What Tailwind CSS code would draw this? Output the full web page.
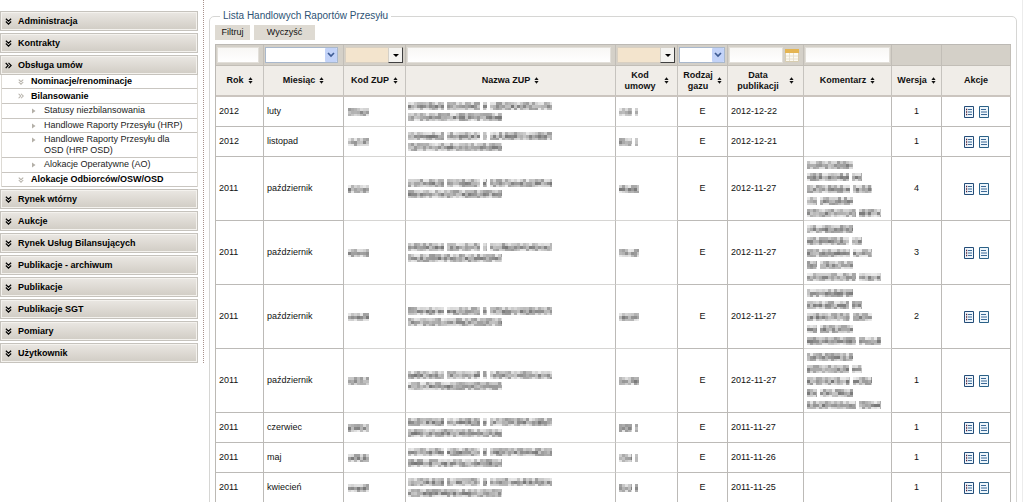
<!DOCTYPE html>
<html lang="pl">
<head>
<meta charset="utf-8">
<title>Lista Handlowych Raportów Przesyłu</title>
<script src="https://cdn.jsdelivr.net/npm/@tailwindcss/browser@4"></script>
</head>
<body class="bg-white text-[#111] text-[9px] leading-[11px] font-['Liberation_Sans',Arial,sans-serif]">
<svg class="hidden" aria-hidden="true">
  <symbol id="down" viewBox="0 0 8 8"><path d="M1 .8 4 3.6 7 .8M1 4 4 7 7 4" fill="none" stroke="currentColor" stroke-width="1.4"/></symbol>
  <symbol id="right" viewBox="0 0 8 8"><path d="M.8 1 3.6 4 .8 7M4 1 7 4 4 7" fill="none" stroke="currentColor" stroke-width="1.4"/></symbol>
  <symbol id="tri" viewBox="0 0 4 6"><path d="M0 .5 3.5 3 0 5.5z" fill="currentColor"/></symbol>
  <symbol id="sort" viewBox="0 0 5 7"><path d="M2.5 .3 4.6 3H.4zM.4 4h4.2L2.5 6.7z" fill="currentColor"/></symbol>
  <symbol id="list" viewBox="0 0 10 12"><path d="M.5.5h9v11h-9z" fill="#eef6fc" stroke="#244c78"/><path d="M4 3.5h4M4 6h4M4 8.5h4" stroke="#3d6a97"/><path d="M2 3.5h1.2M2 6h1.2M2 8.5h1.2" stroke="#5a1f33" stroke-width="1.4"/></symbol>
  <symbol id="doc" viewBox="0 0 10 12"><path d="M.5.5h9v11h-9z" fill="#eef6fc" stroke="#2b6187"/><path d="M2 3.5h5M2 6h6M2 8.5h6" stroke="#3d6a97"/></symbol>
</svg>

<div class="flex items-start border-r border-[#ececec] overflow-hidden h-screen">
  <nav class="w-[204px] shrink-0 pt-[11px] pr-[5px] border-r border-dotted border-[#a8928c] text-black" aria-label="Menu">
    <ul id="menu" class="flex flex-col gap-[2px]"></ul>
  </nav>

  <main class="grow min-w-0 pl-[5px] pr-[5px] pt-[10px]">
    <fieldset class="min-w-0 border border-[#d6d6d4] rounded-[5px] px-[5px] pb-2">
      <legend class="ml-[5px] px-[3px] text-[10px] leading-[12px] text-[#2d5375]">Lista Handlowych Raportów Przesyłu</legend>
      <div class="flex gap-1 pt-[3px] pb-1">
        <button type="button" class="h-[15px] w-[35px] bg-[#dedad2]">Filtruj</button>
        <button type="button" class="h-[15px] w-[61px] bg-[#dedad2]">Wyczyść</button>
      </div>
      <table class="w-full table-fixed border-separate border-spacing-0 border-l border-t border-[#bcb9b4]">
        <colgroup>
          <col class="w-[48px]"><col class="w-[80px]"><col class="w-[62px]"><col><col class="w-[62px]"><col class="w-[50px]"><col class="w-[76px]"><col class="w-[88px]"><col class="w-[50px]"><col class="w-[69px]">
        </colgroup>
        <thead id="head"></thead>
        <tbody id="rows"></tbody>
      </table>
    </fieldset>
  </main>
</div>

<script>
const icon = (id, cls) => `<svg class="${cls}" aria-hidden="true"><use href="#${id}"/></svg>`;

/* Side menu */
const sub = [
  [2, 'Nominacje/renominacje', 'down', 'h-[14px]'],
  [2, 'Bilansowanie', 'right', 'h-[15px]'],
  [3, 'Statusy niezbilansowania', 'tri', 'h-[15px]'],
  [3, 'Handlowe Raporty Przesyłu (HRP)', 'tri', 'h-[14px]'],
  [3, 'Handlowe Raporty Przesyłu dla<br>OSD (HRP OSD)', 'tri', 'h-[25px]'],
  [3, 'Alokacje Operatywne (AO)', 'tri', 'h-[15px]'],
  [2, 'Alokacje Odbiorców/OSW/OSD', 'down', 'h-[14px]'],
];
const subHtml = '<ul class="border-x border-[#dddad4] ml-px">' + sub.map(([lvl, t, ic, h]) => lvl === 2
  ? `<li><a href="#" class="flex items-center gap-[7px] pl-4 font-bold border-b border-[#c9c6c1] ${h}">${icon(ic, 'size-[6px] text-[#b4b0a8]')}${t}</a></li>`
  : `<li><a href="#" class="flex items-start gap-2 pt-px pl-[30px] text-[#222] border-b border-[#c9c6c1] ${h}">${icon(ic, 'w-1 h-[6px] mt-[3px] text-[#b4b0a8]')}<span>${t}</span></a></li>`).join('') + '</ul>';
document.getElementById('menu').innerHTML = ['Administracja', 'Kontrakty', 'Obsługa umów', 'Rynek wtórny', 'Aukcje', 'Rynek Usług Bilansujących', 'Publikacje - archiwum', 'Publikacje', 'Publikacje SGT', 'Pomiary', 'Użytkownik']
  .map(t => `<li><button type="button" class="w-full h-5 border border-[#c6c3bd] p-px bg-[#f4f2ee]"><span class="flex items-center gap-[6px] h-4 pl-[3px] font-bold bg-linear-to-b from-[#e9e6e1] to-[#d2cec6]">${icon(t === 'Obsługa umów' ? 'right' : 'down', 'size-[7px]')}${t}</span></button>${t === 'Obsługa umów' ? subHtml : ''}</li>`).join('');

/* Mosaic that covers confidential values: each line is a list of [start, end] word spans */
let seed = 7;
const rnd = () => (seed = (seed * 16807) % 2147483647) / 2147483647;
function mosaic(w, lines, step) {
  let r = '';
  lines.forEach((words, li) => words.forEach(([a, b]) => {
    for (let x = a; x < b; x += 3) for (let k = 0; k < 3; k++) {
      const g = Math.round((k === 1 ? 120 : 155) + rnd() * 80);
      r += `<rect x="${x}" y="${li * step + k * 3}" width="${Math.min(3, b - x)}" height="${k === 2 ? 2 : 3}" fill="rgb(${g},${g},${g})"/>`;
    }
  }));
  const h = (lines.length - 1) * step + 8;
  return `<svg width="${w}" height="${h}" viewBox="0 0 ${w} ${h}" shape-rendering="crispEdges" role="img" aria-label="dane ukryte" class="block">${r}</svg>`;
}
const nameLines = [[[0, 36], [39, 72], [75, 79], [82, 144]], [[0, 94]]];
const noteLines = [[[0, 46]], [[0, 42], [45, 55]], [[0, 43], [46, 65]], [[0, 10], [13, 46]], [[0, 49], [52, 74]]];

/* Filter row and column headings */
const field = 'block w-full h-4 border border-[#e2dfd9] bg-linear-to-b from-[#f8f7f5] to-white';
const input = l => `<input type="text" aria-label="${l}" class="${field}">`;
const select = l => `<span class="relative block"><select aria-label="${l}" class="appearance-none block w-full h-4 bg-white border border-[#a9b8cc]"><option></option></select><span class="pointer-events-none absolute right-px top-px w-3 h-[14px] rounded-[1px] bg-[#c3d3f8] flex items-center justify-center"><svg class="w-2 h-[6px]" viewBox="0 0 8 6" aria-hidden="true"><path d="M1 1l3 3 3-3" fill="none" stroke="#3f5c94" stroke-width="1.7"/></svg></span></span>`;
const combo = l => `<span class="relative block"><select aria-label="${l}" class="appearance-none block w-full h-4 bg-[#f3e4cd] border border-[#d9d0c2]"><option></option></select><span class="pointer-events-none absolute right-0 top-0 w-[15px] h-4 bg-[#f4f3f0] border border-[#d4d0c8] border-r-[#404040] border-b-[#404040] flex items-center justify-center"><svg class="w-[6px] h-[3px]" viewBox="0 0 6 3" aria-hidden="true"><path d="M0 0h6L3 3z"/></svg></span></span>`;
const cal = `<span class="flex gap-[2px]"><input type="text" aria-label="Data publikacji" class="${field} grow min-w-0"><button type="button" aria-label="Kalendarz" class="shrink-0"><svg class="w-[14px] h-4" viewBox="0 0 14 16" aria-hidden="true"><path d="M.5 2.5h13v12H.5z" fill="#fdfaf1" stroke="#d8cdb0"/><path d="M0 2h14v4H0z" fill="#e5b552"/><path d="M4.5 6v8M8.5 6v8M1 9h12M1 12h12" stroke="#e6e0d0"/></svg></button></span>`;
const cols = [
  ['Rok', input('Rok'), 'pl-px pr-1'],
  ['Miesiąc', select('Miesiąc'), 'pl-px pr-[5px]'],
  ['Kod ZUP', combo('Kod ZUP'), 'pl-px pr-[2px]'],
  ['Nazwa ZUP', input('Nazwa ZUP'), 'pl-px pr-1'],
  ['Kod<br>umowy', combo('Kod umowy'), 'pl-px pr-[2px]'],
  ['Rodzaj<br>gazu', select('Rodzaj gazu'), 'pl-px pr-[2px]'],
  ['Data<br>publikacji', cal, 'pl-px pr-1'],
  ['Komentarz', input('Komentarz'), 'pl-px pr-px'],
  ['Wersja', '', ''],
  ['Akcje', '', ''],
];
document.getElementById('head').innerHTML =
  '<tr>' + cols.map(c => `<td class="h-[21px] bg-[#d4d0c8] border-r border-b border-[#c2beb7] ${c[2]}">${c[1]}</td>`).join('') + '</tr><tr>' +
  cols.map(c => {
    const gap = c[0].startsWith('Data') ? 'gap-[10px]' : c[0].startsWith('Kod<') ? 'gap-2' : 'gap-1';
    return `<th scope="col" class="h-[31px] p-0 bg-[#f0ede8] border-r border-b-2 border-r-[#c6c3be] border-b-[#cbc5bf]"><span class="flex items-center justify-center ${gap}"><span>${c[0]}</span>${c[0] === 'Akcje' ? '' : `<button type="button" aria-label="Sortuj">${icon('sort', 'w-[5px] h-[7px]')}</button>`}</span></th>`;
  }).join('') + '</tr>';

/* Report rows */
const data = [
  ['2012', 'luty', '2012-12-22', 0, 1], ['2012', 'listopad', '2012-12-21', 0, 1],
  ['2011', 'październik', '2012-11-27', 1, 4], ['2011', 'październik', '2012-11-27', 1, 3],
  ['2011', 'październik', '2012-11-27', 1, 2], ['2011', 'październik', '2012-11-27', 1, 1],
  ['2011', 'czerwiec', '2011-11-27', 0, 1], ['2011', 'maj', '2011-11-26', 0, 1], ['2011', 'kwiecień', '2011-11-25', 0, 1],
];
document.getElementById('rows').innerHTML = data.map(([y, m, d, note, v]) => {
  const h = note ? 'h-[64px]' : 'h-[30px]';
  const td = (cls, html) => `<td class="${h} py-0 border-r border-b border-r-[#bcbab7] ${cls}">${html}</td>`;
  const line = 'border-b-[#bcbab7]', soft = 'border-b-[#d6d5d3]';
  const code = note ? [[0, 20]] : [[0, 13], [16, 19]];
  return '<tr>' + td(`px-[3px] ${line}`, y) + td(`px-[3px] ${line}`, m) + td(`px-1 ${soft}`, mosaic(21, [[[0, 21]]], 11)) +
    td(`px-[2px] ${soft}`, mosaic(146, nameLines, 11)) + td(`px-[3px] ${soft}`, mosaic(21, [code], 11)) +
    td(`text-center ${line}`, 'E') + td(`px-[3px] ${line}`, d) + td(`px-[3px] ${soft}`, note ? mosaic(76, noteLines, 12) : '') +
    td(`text-center ${line}`, v) +
    td(line, `<span class="flex justify-center gap-[5px]"><button type="button" aria-label="Szczegóły">${icon('list', 'w-[10px] h-3')}</button><button type="button" aria-label="Dokument">${icon('doc', 'w-[10px] h-3')}</button></span>`) + '</tr>';
}).join('');
</script>
</body>
</html>
